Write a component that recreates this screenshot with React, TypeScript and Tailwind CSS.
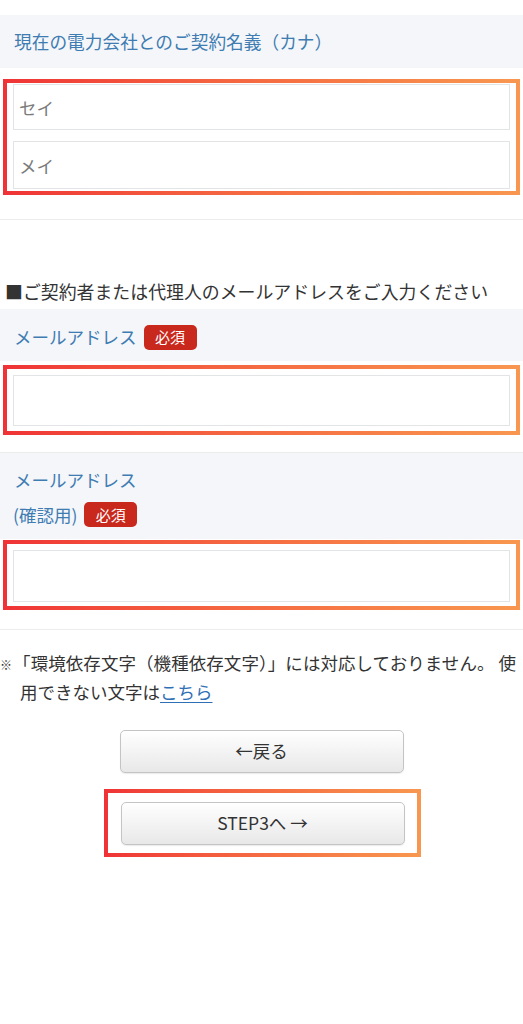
import React from 'react'

const font = { fontFamily: '"Noto Sans CJK JP", "Noto Sans", sans-serif' }

function Highlight({ className = '', innerClassName = '', children }: { className?: string; innerClassName?: string; children: React.ReactNode }) {
  return (
    <div className={`bg-linear-to-r from-[#ef3236] to-[#f8974f] p-[4px] ${className}`}>
      <div className={`bg-white ${innerClassName}`}>{children}</div>
    </div>
  )
}

function Field({ placeholder, h }: { placeholder?: string; h: string }) {
  return (
    <input
      readOnly
      placeholder={placeholder}
      className={`block w-full ${h} border border-[#e3e4e6] bg-white px-[5px] text-[17.5px] text-[#333] outline-none placeholder:text-[#7b7b7b]`}
    />
  )
}

function Required() {
  return (
    <span className="ml-[7px] inline-flex h-[25px] w-[53px] items-center justify-center rounded-[5px] bg-[#c9281d] text-[15px] text-white">
      必須
    </span>
  )
}

function NavButton({ children }: { children: React.ReactNode }) {
  return (
    <button className="flex h-[43px] w-[284px] items-center justify-center rounded-[5px] border border-[#c4c4c4] bg-linear-to-b from-white to-[#e8e8e8] text-[17.5px] text-[#333] shadow-[0_1px_1px_rgba(0,0,0,0.08)]">
      {children}
    </button>
  )
}

export default function App() {
  return (
    <div className="min-h-[1024px] w-[523px] bg-white pt-[15px] text-[#333]" style={font}>
      {/* 契約名義 */}
      <div className="flex h-[53px] items-center bg-[#f4f6f9] px-[14px] text-[17.7px] text-[#3e7cb2]">
        現在の電力会社とのご契約名義（カナ）
      </div>
      <div className="border-b border-[#ececec] px-[3px] pb-[24px] pt-[11px]">
        <Highlight innerClassName="flex flex-col gap-[11px] px-[6px] pb-[2px] pt-[1px]">
          <Field placeholder="セイ" h="h-[46px]" />
          <Field placeholder="メイ" h="h-[48px]" />
        </Highlight>
      </div>

      {/* メールアドレス */}
      <div className="mb-[2px] mt-[55px] flex h-[32px] items-center pl-[5px] text-[17.9px] text-[#333]">
        ■ご契約者または代理人のメールアドレスをご入力ください
      </div>
      <div className="flex h-[52px] items-center bg-[#f4f6f9] px-[14px] pt-[4px] text-[17.5px] text-[#3e7cb2]">
        メールアドレス
        <Required />
      </div>
      <div className="border-b border-[#ececec] px-[3px] pb-[17px] pt-[4px]">
        <Highlight innerClassName="px-[6px] pb-[5px] pt-[6px]">
          <Field h="h-[51px]" />
        </Highlight>
      </div>

      <div className="flex h-[86px] flex-col justify-center bg-[#f4f6f9] px-[14px] pt-[2px] text-[17.5px] leading-[35px] text-[#3e7cb2]">
        <div>メールアドレス</div>
        <div className="-ml-[1px] flex items-center">
          (確認用)
          <Required />
        </div>
      </div>
      <div className="border-b border-[#ececec] px-[3px] pb-[19px] pt-[1px]">
        <Highlight innerClassName="px-[6px] pb-[4px] pt-[6px]">
          <Field h="h-[52px]" />
        </Highlight>
      </div>

      {/* 注意書き */}
      <p className="mt-[19px] pl-[20px] pr-[7px] text-justify -indent-[20px] text-[17.5px] leading-[27px] text-[#333]">
        <span className="inline-block w-[13px] indent-0 text-[12px]">※</span>
        「環境依存文字（機種依存文字）」には対応しておりません。 使用できない文字は<a href="#" className="text-[#2f6fb5] underline underline-offset-[3px]">こちら</a>
      </p>

      {/* ボタン */}
      <div className="mt-[25px] flex flex-col items-center">
        <NavButton>←戻る</NavButton>
        <Highlight className="ml-[1px] mt-[16px] w-[317px]" innerClassName="flex justify-center pb-[8px] pl-[1px] pt-[9px]">
          <NavButton>STEP3へ →</NavButton>
        </Highlight>
      </div>
    </div>
  )
}
